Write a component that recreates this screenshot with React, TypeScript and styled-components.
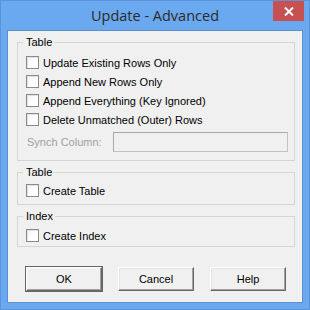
import styled, { createGlobalStyle } from "styled-components";

const Global = createGlobalStyle`
  html, body {
    margin: 0;
    padding: 0;
    background: #ffffff;
  }
  * {
    box-sizing: border-box;
  }
`;

const Frame = styled.div`
  width: 310px;
  height: 310px;
  background: #6aa8ef;
  border: 1px solid #5a93d8;
  padding: 0 6px 6px 6px;
  display: flex;
  flex-direction: column;
`;

const TitleBar = styled.div`
  position: relative;
  height: 29px;
  display: flex;
  align-items: center;
  justify-content: center;
  font-family: "Open Sans", "Noto Sans", sans-serif;
  font-size: 14.5px;
  color: #2b2b2b;
  padding-bottom: 1px;
`;

const CloseButton = styled.div`
  position: absolute;
  top: 0;
  right: -1px;
  width: 31px;
  height: 20px;
  background: #c75050;
  display: flex;
  align-items: center;
  justify-content: center;
`;

const Client = styled.div`
  flex: 1;
  background: #f0f0f0;
  border: 1px solid #5b8fcf;
  padding: 5px 7px 0 9px;
  display: flex;
  flex-direction: column;
  font-family: "Liberation Sans", Arial, sans-serif;
  font-size: 11px;
  color: #000;
`;

const Group = styled.fieldset<{ $pad: string; $gap?: number }>`
  margin: 0 0 ${(p) => p.$gap ?? 0}px 0;
  padding: ${(p) => p.$pad};
  border: 1px solid #d5d5d5;
  display: flex;
  flex-direction: column;
`;

const Legend = styled.legend`
  margin-left: -3px;
  padding: 0 2px 0 3px;
  line-height: 13px;
  color: #000;
`;

const CheckRow = styled.label<{ $mb?: number }>`
  display: flex;
  align-items: center;
  height: 13px;
  gap: 4px;
  margin-bottom: ${(p) => p.$mb ?? 0}px;
`;

const Box = styled.span`
  width: 13px;
  height: 13px;
  border: 1px solid #8a8a8a;
  background: linear-gradient(135deg, #f4f4f4 0%, #ffffff 60%);
  box-shadow: inset 1px 1px 0 #e2e2e2;
  flex: none;
`;

const SynchRow = styled.div`
  display: flex;
  align-items: center;
  margin-top: 6px;
`;

const SynchLabel = styled.span`
  width: 87px;
  color: #a0a0a0;
  padding-left: 1px;
`;

const SynchInput = styled.div`
  width: 175px;
  height: 20px;
  background: #f0f0f0;
  border: 1px solid #c2c2c2;
  border-top-color: #a8a8a8;
  border-left-color: #a8a8a8;
`;

const ButtonRow = styled.div`
  display: flex;
  gap: 16px;
  padding-left: 9px;
  margin-top: 20px;
`;

const Button = styled.div<{ $default?: boolean }>`
  width: 76px;
  height: 24px;
  display: flex;
  align-items: center;
  justify-content: center;
  background: #f0f0f0;
  color: #000;
  border: 1px solid;
  border-color: #ffffff #696969 #696969 #ffffff;
  box-shadow: ${(p) =>
    p.$default
      ? "0 0 0 1px #646464, inset -1px -1px 0 #a0a0a0"
      : "inset -1px -1px 0 #a0a0a0, inset 1px 1px 0 #e3e3e3"};
`;

const rows = [
  "Update Existing Rows Only",
  "Append New Rows Only",
  "Append Everything (Key Ignored)",
  "Delete Unmatched (Outer) Rows",
];

export default function App() {
  return (
    <>
      <Global />
      <Frame>
        <TitleBar>
          Update - Advanced
          <CloseButton>
            <svg width="10" height="9" viewBox="0 0 10 9">
              <path d="M1 0.5 L9 8.5 M9 0.5 L1 8.5" stroke="#ffffff" strokeWidth="2" />
            </svg>
          </CloseButton>
        </TitleBar>
        <Client>
          <Group $pad="7px 0 8px 8px" $gap={5}>
            <Legend>Table</Legend>
            {rows.map((r, i) => (
              <CheckRow key={r} $mb={i < rows.length - 1 ? 6 : 0}>
                <Box />
                {r}
              </CheckRow>
            ))}
            <SynchRow>
              <SynchLabel>Synch Column:</SynchLabel>
              <SynchInput />
            </SynchRow>
          </Group>
          <Group $pad="5px 0 7px 8px" $gap={5}>
            <Legend>Table</Legend>
            <CheckRow>
              <Box />
              Create Table
            </CheckRow>
          </Group>
          <Group $pad="6px 0 4px 8px">
            <Legend>Index</Legend>
            <CheckRow>
              <Box />
              Create Index
            </CheckRow>
          </Group>
          <ButtonRow>
            <Button $default>OK</Button>
            <Button>Cancel</Button>
            <Button>Help</Button>
          </ButtonRow>
        </Client>
      </Frame>
    </>
  );
}
